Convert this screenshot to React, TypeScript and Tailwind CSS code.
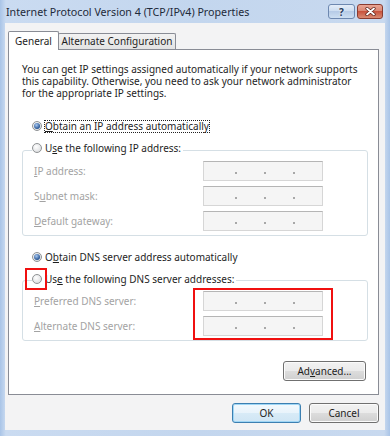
import React from "react";

const FONT = "font-['Noto_Sans',sans-serif]";

function Radio({ checked }: { checked?: boolean }) {
  return (
    <span className="w-[10px] h-[10px] shrink-0 rounded-full border border-[#8f9294] bg-[radial-gradient(circle_at_40%_35%,#ffffff,#d3d5d8)] flex items-center justify-center">
      {checked && (
        <span className="w-[6px] h-[6px] rounded-full bg-[radial-gradient(circle_at_40%_35%,#a9c9f2,#1d4c8c_75%)]" />
      )}
    </span>
  );
}

function IpBox() {
  return (
    <div className="w-[120px] h-[20px] shrink-0 border border-[#d6d6d6] border-t-[#b5b5b5] bg-[#f5f5f5] flex items-end pb-[6px]">
      <div className="flex ml-[31px] gap-[27px]">
        <span className="w-[2px] h-[2px] bg-[#a8a8a8]" />
        <span className="w-[2px] h-[2px] bg-[#a8a8a8]" />
        <span className="w-[2px] h-[2px] bg-[#a8a8a8]" />
      </div>
    </div>
  );
}

function FieldRow({ pre, u, post }: { pre: string; u: string; post: string }) {
  return (
    <div className="flex items-center h-[20px] pl-[11px]">
      <span className="w-[169px] text-[#a3a3a3]">
        {pre}
        <span className="underline">{u}</span>
        {post}
      </span>
      <IpBox />
    </div>
  );
}

function WinButton({ children, def }: { children: React.ReactNode; def?: boolean }) {
  return (
    <div
      className={
        def
          ? "h-[20px] w-[69px] rounded-[3px] border border-[#3c7fb1] shadow-[inset_0_0_0_1px_#9fd6f5] bg-[linear-gradient(#f3f9fd_0%,#e8f3fb_50%,#d8ebf7_50%,#cfe5f4_100%)] flex items-center justify-center text-[#1e1e1e]"
          : "h-[20px] rounded-[3px] border border-[#707070] shadow-[inset_0_0_0_1px_#fbfbfb] bg-[linear-gradient(#f2f2f2_0%,#ebebeb_50%,#dddddd_50%,#cfcfcf_100%)] flex items-center justify-center text-[#1e1e1e]"
      }
    >
      {children}
    </div>
  );
}

export default function App() {
  return (
    <div
      className={`relative w-[390px] h-[436px] overflow-hidden flex flex-col bg-[linear-gradient(90deg,#a9c4e7_0%,#cadbf1_1.5%,#c3d6ee_50%,#c8d9ef_98.5%,#a9c4e7_100%)] text-[10px] leading-[11px] text-[#1b1b1b] ${FONT}`}
    >
      {/* Title bar */}
      <div className="h-[23px] shrink-0 flex items-start pl-[6px] pr-[7px]">
        <span className="mt-[6px] text-[10.7px] leading-[12px] text-[#1e2a3a]">
          Internet Protocol Version 4 (TCP/IPv4) Properties
        </span>
        <div className="ml-auto mt-[4px] flex gap-[2px]">
          <div className="w-[27px] h-[15px] rounded-[3px] border border-[#6d88b0] bg-[linear-gradient(#e4edf8_0%,#cbdcf0_50%,#b6cbe7_50%,#cddff2_100%)] flex items-center justify-center">
            <span className="text-[10px] leading-[10px] font-bold text-[#26395a] [text-shadow:0_0_2px_#ffffff]">?</span>
          </div>
          <div className="w-[26px] h-[15px] rounded-[3px] border border-[#8a3b2f] bg-[linear-gradient(#e9a594_0%,#d98571_50%,#c8533d_50%,#d98b73_100%)] flex items-center justify-center">
            <svg width="11" height="9" viewBox="0 0 11 9">
              <path d="M2 1.5 L9 7.5 M9 1.5 L2 7.5" stroke="#5a1f16" strokeWidth="3.2" strokeLinecap="round" />
              <path d="M2 1.5 L9 7.5 M9 1.5 L2 7.5" stroke="#ffffff" strokeWidth="1.8" strokeLinecap="round" />
            </svg>
          </div>
        </div>
      </div>

      {/* Body */}
      <div className="mx-[5px] mb-[6px] flex-1 bg-[#f3f3f4] flex flex-col pl-[3px] pr-[6px] pt-[8px]">
        {/* Tabs */}
        <div className="relative z-10 h-[18px] flex items-end">
          <div className="h-[19px] w-[51px] -mb-px bg-white border-x border-t border-[#898c95] rounded-t-[2px] flex items-center justify-center text-[#1e1e1e]">
            General
          </div>
          <div className="h-[16px] w-[118px] -ml-px border-x border-t border-[#898c95] rounded-t-[2px] bg-[linear-gradient(#f2f2f2,#e3e3e3)] flex items-center justify-center text-[#1e1e1e]">
            Alternate Configuration
          </div>
        </div>

        {/* Panel */}
        <div className="h-[346px] shrink-0 bg-white border border-[#898c95] pt-[13px] pl-[13px] pr-[10px] flex flex-col">
          <p className="text-[#1e1e1e] whitespace-nowrap leading-[12px]">
            You can get IP settings assigned automatically if your network supports
            <br />
            this capability. Otherwise, you need to ask your network administrator
            <br />
            for the appropriate IP settings.
          </p>

          <div className="mt-[20px] ml-[10px] h-[14px] flex items-center gap-[2px]">
            <Radio checked />
            <span className="h-[13px] flex items-center border border-dotted border-[#222] text-[#1e1e1e]">
              <span className="underline">O</span>btain an IP address automatically
            </span>
          </div>

          <div className="mt-[17px] border border-[#d5dfe5] rounded-[3px] pb-[4px] flex flex-col">
            <div className="-mt-[10px] ml-[9px] self-start h-[14px] bg-white pr-[2px] flex items-center gap-[3px] text-[#1e1e1e]">
              <Radio />
              <span>
                U<span className="underline">s</span>e the following IP address:
              </span>
            </div>
            <div className="mt-[6px] flex flex-col gap-[5px]">
              <FieldRow pre="" u="I" post="P address:" />
              <FieldRow pre="S" u="u" post="bnet mask:" />
              <FieldRow pre="" u="D" post="efault gateway:" />
            </div>
          </div>

          <div className="mt-[14px] ml-[10px] h-[14px] flex items-center gap-[3px] text-[#1e1e1e]">
            <Radio checked />
            <span>
              O<span className="underline">b</span>tain DNS server address automatically
            </span>
          </div>

          <div className="mt-[16px] border border-[#d5dfe5] rounded-[3px] pb-[4px] flex flex-col">
            <div className="-mt-[9px] ml-[9px] self-start h-[14px] bg-white pr-[2px] flex items-center gap-[3px] text-[#1e1e1e]">
              <Radio />
              <span>
                Us<span className="underline">e</span> the following DNS server addresses:
              </span>
            </div>
            <div className="mt-[5px] flex flex-col gap-[5px]">
              <FieldRow pre="" u="P" post="referred DNS server:" />
              <FieldRow pre="" u="A" post="lternate DNS server:" />
            </div>
          </div>

          <div className="mt-[20px] flex justify-end pr-[2px]">
            <div className="w-[83px]">
              <WinButton>
                <span>
                  Ad<span className="underline">v</span>anced...
                </span>
              </WinButton>
            </div>
          </div>
        </div>

        {/* Footer */}
        <div className="mt-[8px] flex justify-end gap-[8px]">
          <WinButton def>OK</WinButton>
          <div className="w-[70px]">
            <WinButton>Cancel</WinButton>
          </div>
        </div>
      </div>

      {/* Red annotation boxes */}
      <div className="absolute left-[25px] top-[268px] w-[22px] h-[22px] border-2 border-[#f01010]" />
      <div className="absolute left-[193px] top-[288px] w-[140px] h-[52px] border-2 border-[#f01010]" />
    </div>
  );
}
